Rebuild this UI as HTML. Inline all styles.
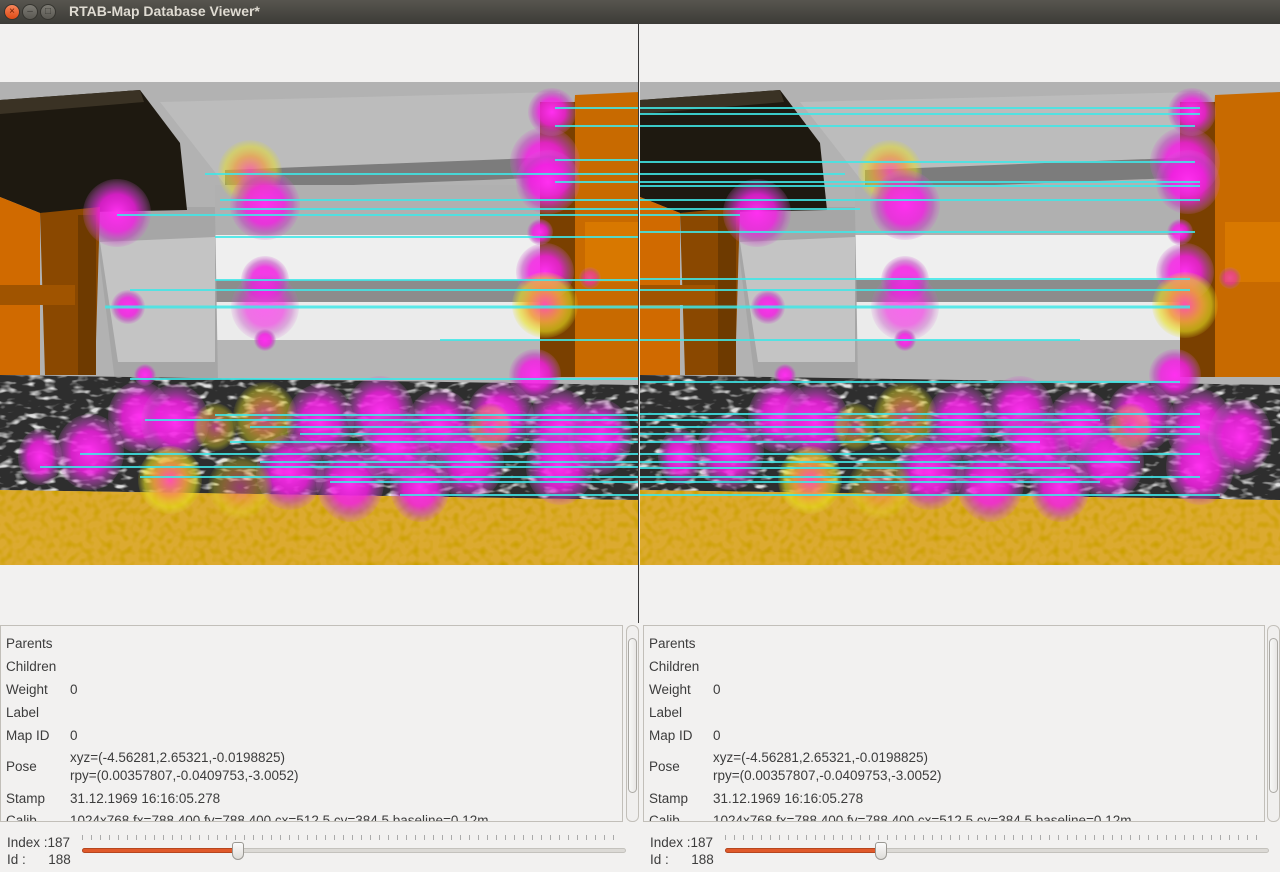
<!DOCTYPE html>
<html><head><meta charset="utf-8"><style>
*{margin:0;padding:0;box-sizing:border-box}
body{width:1280px;height:872px;background:#f2f1f0;font-family:"Liberation Sans",sans-serif;position:relative;overflow:hidden}
.tb{position:absolute;left:0;top:0;width:1280px;height:24px;background:linear-gradient(#57554f,#3c3b37)}
.tb .t{position:absolute;left:69px;top:3px;font-size:14px;font-weight:bold;color:#dfdbd2}
.btn{position:absolute;top:4px;width:16px;height:16px;border-radius:50%;background:linear-gradient(#7d7b74,#5a5852);border:1px solid #35342f;font-size:10px;color:#3a3934;text-align:center;line-height:14px}
.red{background:linear-gradient(#f7865c,#df4b16);color:#6b1b00}
.div{position:absolute;left:638px;top:24px;width:1px;height:599px;background:#3a3a3a}
.img{position:absolute;top:82px;width:639px;height:483px;overflow:hidden}
.info{position:absolute;top:625px;width:623px;height:197px;border:1px solid #c2bfb9;background:#f2f1f0;overflow:hidden;font-size:13.5px;color:#3c3c3c}
.info div{position:absolute;left:5px;white-space:nowrap}
.info .v{left:69px}
.sb{position:absolute;top:625px;width:13px;height:197px;border:1px solid #c2bfb9;border-radius:6px;background:#f0efee}
.sb .h{position:absolute;left:1px;top:12px;width:9px;height:155px;border:1px solid #aaa8a3;border-radius:5px;background:linear-gradient(90deg,#f8f8f7,#e8e7e5)}
.lab{position:absolute;font-size:13.5px;color:#3c3c3c;white-space:nowrap}
.ticks{position:absolute;top:835px;height:5px;background:repeating-linear-gradient(90deg,#aaa 0 1px,transparent 1px 9px)}
.gr{position:absolute;top:848px;height:5px;border-radius:3px;background:#dcdad6;border:1px solid #c4c2bd}
.fill{position:absolute;top:848px;height:5px;border-radius:3px;background:#e0592a;border:1px solid #b6461f}
.hd{position:absolute;top:842px;width:12px;height:18px;background:linear-gradient(#fbfbfb,#dedcd8);border:1px solid #9a9893;border-radius:3px 3px 6px 6px}
</style></head><body>
<div class="tb"><div class="btn red" style="left:4px">×</div><div class="btn" style="left:22px">–</div><div class="btn" style="left:40px">□</div><div class="t">RTAB-Map Database Viewer*</div></div>

<svg width="0" height="0" style="position:absolute">
<defs>
<filter id="nz" x="0" y="0" width="100%" height="100%"><feTurbulence type="fractalNoise" baseFrequency="0.07 0.16" numOctaves="2" seed="3"/><feColorMatrix type="matrix" values="0 0 0 0 1  0 0 0 0 1  0 0 0 0 1  0 0 0 4 -2.1"/><feComposite in2="SourceGraphic" operator="in"/></filter>
<filter id="ny" x="0" y="0" width="100%" height="100%"><feTurbulence type="fractalNoise" baseFrequency="0.15" numOctaves="1" seed="5"/><feColorMatrix type="matrix" values="0 0 0 0 0.6  0 0 0 0 0.35  0 0 0 0 0  0 0 0 2.5 -1.1"/><feComposite in2="SourceGraphic" operator="in"/></filter>
<radialGradient id="m"><stop offset="0" stop-color="#ff30f0"/><stop offset=".55" stop-color="#f020e0" stop-opacity=".85"/><stop offset=".8" stop-color="#c040c0" stop-opacity=".55"/><stop offset="1" stop-color="#d060d0" stop-opacity=".15"/></radialGradient>
<radialGradient id="y"><stop offset="0" stop-color="#ff50b0"/><stop offset=".5" stop-color="#f0a040" stop-opacity=".9"/><stop offset=".8" stop-color="#e8e020" stop-opacity=".6"/><stop offset="1" stop-color="#e0e020" stop-opacity=".1"/></radialGradient>
<g id="scene">
<rect width="640" height="483" fill="#b2b2b2"/>
<polygon points="160,20 560,10 560,85 225,103" fill="#bcbcbc"/>
<polygon points="225,88 560,75 560,95 225,108" fill="#7c7c7c"/>
<rect x="215" y="103" width="345" height="50" fill="#b0b0b0"/>
<rect x="215" y="153" width="330" height="45" fill="#efefef"/>
<rect x="215" y="198" width="330" height="22" fill="#8c8c8c"/>
<rect x="215" y="220" width="330" height="38" fill="#ebebeb"/>
<rect x="215" y="258" width="330" height="40" fill="#b6b6b6"/>
<polygon points="95,125 215,125 218,300 115,300 100,180" fill="#a6a6a6"/>
<polygon points="100,160 215,155 215,280 118,280" fill="#c4c4c4"/>
<polygon points="0,18 140,8 180,61 187,128 40,131 0,115" fill="#1e1910"/>
<polygon points="0,18 140,8 144,20 0,32" fill="#3a3224"/>
<polygon points="0,115 40,131 40,293 0,293" fill="#d06a00"/>
<polygon points="40,131 100,125 95,293 45,293" fill="#8a4800"/>
<rect x="0" y="203" width="75" height="20" fill="#a05400"/>
<rect x="78" y="133" width="18" height="160" fill="#6e3a00"/>
<polygon points="575,13 640,10 640,295 560,295" fill="#c86a00"/>
<rect x="540" y="20" width="35" height="275" fill="#7a4000"/>
<rect x="585" y="140" width="55" height="60" fill="#d87800"/>
<polygon points="0,293 640,303 640,418 0,408" fill="#2e2e2e"/>
<polygon points="0,293 640,303 640,418 0,408" fill="#000" filter="url(#nz)" opacity=".85"/>
<polygon points="0,408 640,418 640,483 0,483" fill="#dcaa30"/>
<polygon points="0,408 640,418 640,483 0,483" fill="#000" filter="url(#ny)"/>
<g>
<circle cx="117" cy="131" r="34" fill="url(#m)"/><circle cx="250" cy="90" r="32" fill="url(#y)" opacity=".8"/><circle cx="265" cy="123" r="35" fill="url(#m)"/><circle cx="265" cy="198" r="24" fill="url(#m)"/><circle cx="265" cy="225" r="34" fill="url(#m)" opacity=".7"/><circle cx="128" cy="225" r="17" fill="url(#m)"/><circle cx="545" cy="80" r="35" fill="url(#m)"/><circle cx="548" cy="100" r="32" fill="url(#m)"/><circle cx="552" cy="30" r="24" fill="url(#m)"/><circle cx="545" cy="190" r="29" fill="url(#m)"/><circle cx="545" cy="223" r="33" fill="url(#y)"/><circle cx="535" cy="293" r="26" fill="url(#m)"/><circle cx="145" cy="293" r="11" fill="url(#m)"/><circle cx="265" cy="258" r="11" fill="url(#m)"/><circle cx="540" cy="150" r="13" fill="url(#m)"/><circle cx="590" cy="196" r="11" fill="url(#m)" opacity=".6"/>
<ellipse cx="140" cy="335" rx="32" ry="36" fill="url(#m)"/><ellipse cx="175" cy="340" rx="34" ry="38" fill="url(#m)"/><ellipse cx="265" cy="335" rx="32" ry="35" fill="url(#y)" opacity=".7"/><ellipse cx="215" cy="345" rx="22" ry="24" fill="url(#y)" opacity=".6"/><ellipse cx="320" cy="340" rx="34" ry="38" fill="url(#m)"/><ellipse cx="380" cy="330" rx="34" ry="36" fill="url(#m)"/><ellipse cx="440" cy="345" rx="34" ry="38" fill="url(#m)"/><ellipse cx="500" cy="335" rx="34" ry="36" fill="url(#m)"/><ellipse cx="560" cy="345" rx="34" ry="38" fill="url(#m)"/><ellipse cx="90" cy="370" rx="34" ry="38" fill="url(#m)"/><ellipse cx="40" cy="375" rx="22" ry="28" fill="url(#m)"/><ellipse cx="170" cy="398" rx="32" ry="34" fill="url(#y)"/><ellipse cx="290" cy="390" rx="34" ry="38" fill="url(#m)"/><ellipse cx="350" cy="400" rx="34" ry="40" fill="url(#m)"/><ellipse cx="420" cy="405" rx="30" ry="35" fill="url(#m)"/><ellipse cx="470" cy="380" rx="34" ry="38" fill="url(#m)"/><ellipse cx="395" cy="365" rx="34" ry="38" fill="url(#m)"/><ellipse cx="560" cy="385" rx="34" ry="38" fill="url(#m)"/><ellipse cx="600" cy="355" rx="32" ry="38" fill="url(#m)"/><ellipse cx="240" cy="405" rx="32" ry="32" fill="url(#y)" opacity=".5"/><ellipse cx="490" cy="345" rx="22" ry="24" fill="url(#y)" opacity=".5"/>
</g>
</g>
</defs></svg>

<div class="img" style="left:0"><svg width="640" height="483"><use href="#scene"/>
<g stroke="#40e8e8" stroke-width="2" opacity=".85">
<line x1="555" y1="26" x2="640" y2="26"/><line x1="555" y1="44" x2="640" y2="44"/><line x1="555" y1="78" x2="640" y2="78"/><line x1="205" y1="92" x2="640" y2="92"/><line x1="555" y1="100" x2="640" y2="100"/><line x1="220" y1="118" x2="640" y2="118"/><line x1="220" y1="127" x2="640" y2="127"/><line x1="117" y1="133" x2="640" y2="133"/><line x1="215" y1="155" x2="640" y2="155"/><line x1="215" y1="198" x2="640" y2="198"/><line x1="130" y1="208" x2="640" y2="208"/><line x1="105" y1="225" x2="640" y2="225" stroke-width="3"/><line x1="440" y1="258" x2="640" y2="258"/><line x1="130" y1="297" x2="640" y2="297"/><line x1="215" y1="333" x2="640" y2="333"/><line x1="145" y1="338" x2="640" y2="338"/><line x1="250" y1="345" x2="640" y2="345"/><line x1="300" y1="352" x2="640" y2="352"/><line x1="230" y1="360" x2="640" y2="360"/><line x1="80" y1="372" x2="640" y2="372"/><line x1="260" y1="380" x2="640" y2="380"/><line x1="40" y1="385" x2="640" y2="385"/><line x1="140" y1="395" x2="640" y2="395"/><line x1="330" y1="400" x2="640" y2="400"/><line x1="400" y1="413" x2="640" y2="413"/>
</g></svg></div>
<div class="img" style="left:640px;width:640px"><svg width="640" height="483"><use href="#scene"/>
<g stroke="#40e8e8" stroke-width="2" opacity=".85">
<line x1="0" y1="26" x2="560" y2="26"/><line x1="0" y1="32" x2="560" y2="32"/><line x1="0" y1="44" x2="555" y2="44"/><line x1="0" y1="80" x2="555" y2="80"/><line x1="0" y1="92" x2="205" y2="92"/><line x1="0" y1="100" x2="560" y2="100"/><line x1="0" y1="104" x2="560" y2="104"/><line x1="0" y1="118" x2="560" y2="118"/><line x1="0" y1="127" x2="220" y2="127"/><line x1="0" y1="133" x2="100" y2="133"/><line x1="0" y1="150" x2="555" y2="150"/><line x1="0" y1="197" x2="550" y2="197"/><line x1="0" y1="208" x2="550" y2="208"/><line x1="0" y1="225" x2="550" y2="225" stroke-width="3"/><line x1="0" y1="258" x2="440" y2="258"/><line x1="0" y1="300" x2="540" y2="300"/><line x1="0" y1="332" x2="560" y2="332"/><line x1="0" y1="338" x2="460" y2="338"/><line x1="0" y1="345" x2="560" y2="345"/><line x1="0" y1="352" x2="560" y2="352"/><line x1="0" y1="360" x2="400" y2="360"/><line x1="0" y1="372" x2="560" y2="372"/><line x1="0" y1="380" x2="500" y2="380"/><line x1="0" y1="386" x2="430" y2="386"/><line x1="0" y1="395" x2="560" y2="395"/><line x1="0" y1="400" x2="460" y2="400"/><line x1="0" y1="413" x2="580" y2="413"/>
</g></svg></div>
<div class="div"></div>

<div class="info" style="left:0"><div style="top:10px">Parents</div><div style="top:33px">Children</div><div style="top:56px">Weight</div><div class="v" style="top:56px">0</div><div style="top:79px">Label</div><div style="top:102px">Map ID</div><div class="v" style="top:102px">0</div><div style="top:133px">Pose</div><div class="v" style="top:124px">xyz=(-4.56281,2.65321,-0.0198825)</div><div class="v" style="top:142px">rpy=(0.00357807,-0.0409753,-3.0052)</div><div style="top:165px">Stamp</div><div class="v" style="top:165px">31.12.1969 16:16:05.278</div><div style="top:187px">Calib</div><div class="v" style="top:187px">1024x768 fx=788.400 fy=788.400 cx=512.5 cy=384.5 baseline=0.12m</div></div>
<div class="sb" style="left:626px"><div class="h"></div></div>
<div class="info" style="left:643px;width:622px"><div style="top:10px">Parents</div><div style="top:33px">Children</div><div style="top:56px">Weight</div><div class="v" style="top:56px">0</div><div style="top:79px">Label</div><div style="top:102px">Map ID</div><div class="v" style="top:102px">0</div><div style="top:133px">Pose</div><div class="v" style="top:124px">xyz=(-4.56281,2.65321,-0.0198825)</div><div class="v" style="top:142px">rpy=(0.00357807,-0.0409753,-3.0052)</div><div style="top:165px">Stamp</div><div class="v" style="top:165px">31.12.1969 16:16:05.278</div><div style="top:187px">Calib</div><div class="v" style="top:187px">1024x768 fx=788.400 fy=788.400 cx=512.5 cy=384.5 baseline=0.12m</div></div>
<div class="sb" style="left:1267px"><div class="h"></div></div>

<div class="lab" style="left:7px;top:835px">Index :187</div><div class="lab" style="left:7px;top:852px">Id :&nbsp;&nbsp;&nbsp;&nbsp;&nbsp; 188</div>
<div class="ticks" style="left:82px;width:540px"></div>
<div class="gr" style="left:82px;width:544px"></div><div class="fill" style="left:82px;width:158px"></div><div class="hd" style="left:232px"></div>

<div class="lab" style="left:650px;top:835px">Index :187</div><div class="lab" style="left:650px;top:852px">Id :&nbsp;&nbsp;&nbsp;&nbsp;&nbsp; 188</div>
<div class="ticks" style="left:725px;width:540px"></div>
<div class="gr" style="left:725px;width:544px"></div><div class="fill" style="left:725px;width:158px"></div><div class="hd" style="left:875px"></div>
</body></html>
